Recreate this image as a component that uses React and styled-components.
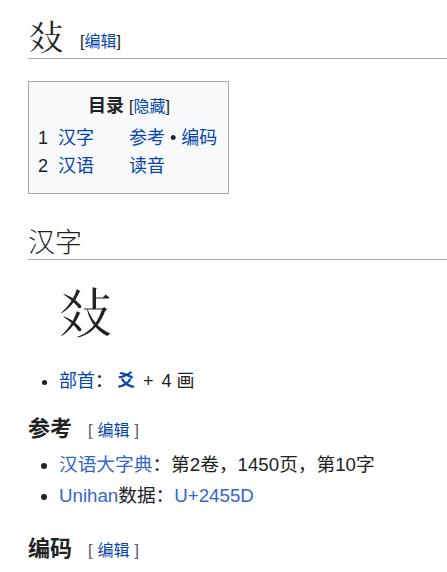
import styled, { createGlobalStyle } from 'styled-components';

const GlobalStyle = createGlobalStyle`
  body {
    margin: 0;
    padding: 13px 0 0 28px;
    background: #fff;
    color: #202122;
    font-family: "Liberation Sans", "Noto Sans CJK SC", sans-serif;
    font-size: 18px;
    overflow: hidden;
  }
  a {
    text-decoration: none;
  }
`;

const Page = styled.div`
  display: flex;
  flex-direction: column;
`;

const PageTitle = styled.h1`
  margin: 0;
  height: 44px;
  display: flex;
  align-items: flex-end;
  gap: 16px;
  font-weight: normal;
  border-bottom: 1px solid #a2a9b1;
  padding-bottom: 1px;
`;

const TitleChar = styled.span`
  font-family: "Noto Sans CJK TC", "Noto Sans CJK SC", serif;
  font-size: 36px;
  line-height: 44px;
`;

const SectionTitle = styled.h2`
  margin: 30px 0 0;
  font-family: "Noto Sans CJK SC", serif;
  font-weight: 300;
  font-size: 27px;
  line-height: 34px;
  border-bottom: 1px solid #a2a9b1;
  padding-bottom: 1px;
`;

const SubTitle = styled.h3`
  margin: ${(p) => p.$top || 20}px 0 0;
  height: 28px;
  display: flex;
  align-items: baseline;
  gap: 16px;
  font-size: 22px;
  line-height: 28px;
  font-weight: bold;
`;

const EditLink = styled.span`
  font-size: 16px;
  line-height: ${(p) => (p.$spaced ? 28 : 30)}px;
  font-weight: normal;
  color: ${(p) => (p.$spaced ? '#54595d' : '#202122')};
  a {
    color: #0645ad;
    margin: ${(p) => (p.$spaced ? '0 5px' : '0')};
  }
`;

const Link = styled.a`
  color: ${(p) => (p.$ext ? '#3366cc' : '#0645ad')};
`;

const Toc = styled.div`
  margin-top: 22px;
  width: 182px;
  padding: 11px 8px 13px 9px;
  background: #f8f9fa;
  border: 1px solid #a2a9b1;
`;

const TocTitle = styled.div`
  text-align: center;
  line-height: 26px;
  b {
    font-size: 18px;
  }
  span {
    font-size: 16px;
  }
  a {
    color: #0645ad;
  }
`;

const TocGrid = styled.div`
  margin-top: 4px;
  display: grid;
  grid-template-columns: 91px auto;
  line-height: 28px;
  white-space: nowrap;
`;

const TocItem = styled.div`
  display: flex;
  gap: 10px;
`;

const BigChar = styled.div`
  margin: 15px 0 0 30px;
  font-family: "Noto Sans CJK TC", "Noto Sans CJK SC", serif;
  font-size: 55px;
  line-height: 70px;
  color: #222;
`;

const List = styled.ul`
  margin: ${(p) => p.$top || 6}px 0 0;
  padding: 0 0 0 31px;
  list-style: disc;
  font-size: ${(p) => p.$size || 18}px;
`;

const Item = styled.li`
  line-height: 26px;
  padding: 3px 0 2px;
`;

const Radical = styled.span`
  color: #0645ad;
  font-weight: bold;
  margin-left: 4px;
`;

const Mid = styled.span`
  margin: 0 8px;
`;

export default function App() {
  return (
    <Page>
      <GlobalStyle />
      <PageTitle>
        <TitleChar>{'\u{2455D}'}</TitleChar>
        <EditLink>[<a href="#">编辑</a>]</EditLink>
      </PageTitle>

      <Toc>
        <TocTitle>
          <b>目录</b> <span>[<a href="#">隐藏</a>]</span>
        </TocTitle>
        <TocGrid>
          <TocItem>
            <span>1</span>
            <Link href="#">汉字</Link>
          </TocItem>
          <div>
            <Link href="#">参考</Link> • <Link href="#">编码</Link>
          </div>
          <TocItem>
            <span>2</span>
            <Link href="#">汉语</Link>
          </TocItem>
          <div>
            <Link href="#">读音</Link>
          </div>
        </TocGrid>
      </Toc>

      <SectionTitle>汉字</SectionTitle>

      <BigChar>{'\u{2455D}'}</BigChar>

      <List $top={20}>
        <Item>
          <Link href="#">部首</Link>：<Radical>爻</Radical>
          <Mid>+</Mid>4 画
        </Item>
      </List>

      <SubTitle $top={19}>
        参考
        <EditLink $spaced>
          [<a href="#">编辑</a>]
        </EditLink>
      </SubTitle>
      <List $size={18.7}>
        <Item>
          <Link href="#" $ext>汉语大字典</Link>：第2卷，1450页，第10字
        </Item>
        <Item>
          <Link href="#" $ext>Unihan</Link>数据：<Link href="#" $ext>U+2455D</Link>
        </Item>
      </List>

      <SubTitle $top={24}>
        编码
        <EditLink $spaced>
          [<a href="#">编辑</a>]
        </EditLink>
      </SubTitle>
    </Page>
  );
}
